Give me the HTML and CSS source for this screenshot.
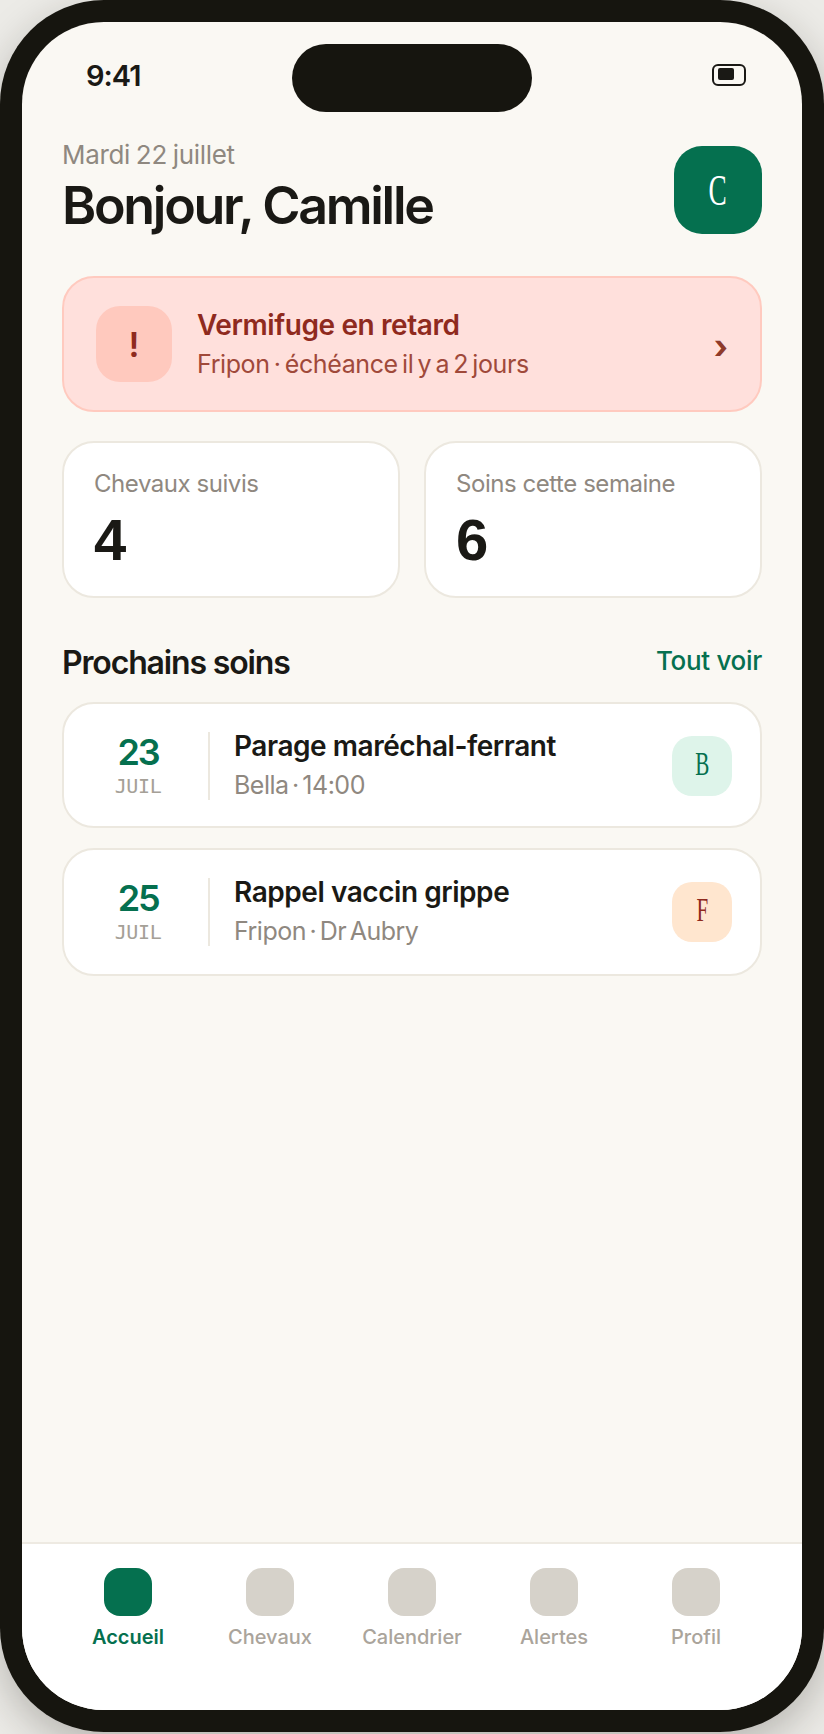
FILE: index.html
```html
<!DOCTYPE html>
<html lang="fr">
<head>
  <meta charset="UTF-8">
  <meta name="viewport" content="width=device-width, initial-scale=1.0">
  <title>Accueil</title>
  <link rel="stylesheet" href="styles.css">
</head>
<body>
  <div class="phone">
    <div class="screen">
      <div class="status">
        <span class="time">9:41</span>
        <div class="island"></div>
        <div class="battery"><span></span></div>
      </div>
      <main>
        <header class="top">
          <div>
            <p class="date">Mardi 22 juillet</p>
            <h1>Bonjour, Camille</h1>
          </div>
          <div class="avatar"><span class="serif">C</span></div>
        </header>

        <section class="alert">
          <div class="alert-icon">!</div>
          <div class="alert-text">
            <h2>Vermifuge en retard</h2>
            <p>Fripon · échéance il y a 2 jours</p>
          </div>
          <span class="chevron">›</span>
        </section>

        <section class="stats">
          <div class="stat">
            <p>Chevaux suivis</p>
            <strong>4</strong>
          </div>
          <div class="stat">
            <p>Soins cette semaine</p>
            <strong>6</strong>
          </div>
        </section>

        <div class="section-head">
          <h2>Prochains soins</h2>
          <a href="#">Tout voir</a>
        </div>

        <section class="list">
          <article class="card">
            <div class="day"><b>23</b><span>JUIL</span></div>
            <div class="info">
              <h3>Parage maréchal-ferrant</h3>
              <p>Bella · 14:00</p>
            </div>
            <div class="tag tag-green"><span class="serif">B</span></div>
          </article>
          <article class="card card-tall">
            <div class="day"><b>25</b><span>JUIL</span></div>
            <div class="info">
              <h3>Rappel vaccin grippe</h3>
              <p>Fripon · Dr Aubry</p>
            </div>
            <div class="tag tag-orange"><span class="serif">F</span></div>
          </article>
        </section>
      </main>

      <nav class="tabs">
        <a class="tab active" href="#"><i></i>Accueil</a>
        <a class="tab" href="#"><i></i>Chevaux</a>
        <a class="tab" href="#"><i></i>Calendrier</a>
        <a class="tab" href="#"><i></i>Alertes</a>
        <a class="tab" href="#"><i></i>Profil</a>
      </nav>
    </div>
  </div>
</body>
</html>
```

FILE: styles.css
```css
:root {
  --frame: #16150f;
  --paper: #faf8f3;
  --ink: #1a1915;
  --muted: #8f8880;
  --green: #05704f;
  --line: #ece8df;
  --red: #8f2a1e;
}
* {
  box-sizing: border-box;
  margin: 0;
  padding: 0;
}
html, body {
  height: 1734px;
  overflow: hidden;
}
body {
  background: #ecebe7;
  font-family: Inter, "Noto Sans", sans-serif;
  color: var(--ink);
}
a {
  text-decoration: none;
  color: inherit;
}
.phone {
  width: 824px;
  height: 1732px;
  padding: 22px;
  background: var(--frame);
  border-radius: 104px;
  box-shadow: 0 14px 40px rgba(30, 28, 20, 0.26);
}
.screen {
  height: 100%;
  background: var(--paper);
  border-radius: 82px;
  overflow: hidden;
  display: flex;
  flex-direction: column;
}
.serif {
  display: inline-block;
  font-family: "Liberation Serif", serif;
  transform: scaleX(0.62);
}

/* status bar */
.status {
  position: relative;
  height: 122px;
  flex-shrink: 0;
}
.time {
  position: absolute;
  left: 64px;
  top: 36px;
  font-size: 29px;
  font-weight: 600;
  letter-spacing: -1px;
}
.island {
  position: absolute;
  left: 270px;
  top: 22px;
  width: 240px;
  height: 68px;
  border-radius: 34px;
  background: var(--frame);
}
.battery {
  position: absolute;
  left: 690px;
  top: 42px;
  width: 34px;
  height: 22px;
  border: 2px solid var(--ink);
  border-radius: 6px;
  padding: 2px 4px;
}
.battery span {
  display: block;
  width: 16px;
  height: 12px;
  background: var(--ink);
  border-radius: 2px;
}

main {
  flex: 1;
  padding: 0 40px;
}
.top {
  display: flex;
  justify-content: space-between;
  align-items: center;
  height: 88px;
  margin-top: 2px;
  margin-bottom: 42px;
}
.date {
  font-size: 26px;
  color: var(--muted);
  letter-spacing: -0.35px;
  word-spacing: -1px;
  line-height: 32px;
  margin-top: -6px;
}
h1 {
  font-size: 52px;
  font-weight: 600;
  letter-spacing: -2.3px;
  line-height: 60px;
  margin-top: 5px;
}
.avatar {
  width: 88px;
  height: 88px;
  border-radius: 28px;
  background: var(--green);
  color: #fff;
  font-size: 44px;
  display: flex;
  align-items: center;
  justify-content: center;
}

/* alert */
.alert {
  height: 136px;
  display: flex;
  align-items: center;
  padding: 0 30px 0 32px;
  background: #ffe0dc;
  border: 2px solid #ffcabf;
  border-radius: 32px;
  margin-bottom: 29px;
}
.alert-icon {
  width: 76px;
  height: 76px;
  border-radius: 24px;
  background: #ffc9be;
  color: var(--red);
  font-size: 34px;
  font-weight: 600;
  display: flex;
  align-items: center;
  justify-content: center;
}
.alert-text {
  flex: 1;
  margin-left: 25px;
}
.alert-text h2 {
  font-size: 28px;
  font-weight: 600;
  letter-spacing: -0.4px;
  line-height: 38px;
  margin-top: 1px;
  color: var(--red);
}
.alert-text p {
  font-size: 25px;
  letter-spacing: -0.4px;
  word-spacing: -2.4px;
  line-height: 40px;
  color: #a0493a;
}
.chevron {
  font-size: 33px;
  font-weight: 700;
  line-height: 1;
  margin-right: 2px;
  padding-top: 4px;
  color: #8f3a2a;
}

/* stats */
.stats {
  display: grid;
  grid-template-columns: 1fr 1fr;
  gap: 24px;
  margin-bottom: 40px;
}
.stat {
  height: 157px;
  background: #fff;
  border: 2px solid var(--line);
  border-radius: 32px;
  padding: 26px 30px;
}
.stat p {
  font-size: 24px;
  letter-spacing: -0.45px;
  line-height: 30px;
  color: var(--muted);
}
.stat strong {
  display: block;
  font-family: "Liberation Sans", sans-serif;
  font-size: 58px;
  font-weight: 700;
  line-height: 62px;
  margin-top: 10px;
}

.section-head {
  display: flex;
  justify-content: space-between;
  align-items: center;
  height: 44px;
  margin-bottom: 20px;
}
.section-head h2 {
  font-size: 32px;
  font-weight: 600;
  letter-spacing: -1.15px;
  margin-top: 4px;
}
.section-head a {
  font-size: 26px;
  font-weight: 500;
  letter-spacing: -0.3px;
  color: var(--green);
}

/* upcoming */
.list {
  display: flex;
  flex-direction: column;
  gap: 20px;
}
.card {
  height: 126px;
  display: flex;
  align-items: center;
  background: #fff;
  border: 2px solid var(--line);
  border-radius: 32px;
  padding: 2px 28px 0 0;
}
.card-tall {
  height: 128px;
  padding-top: 0;
}
.day {
  width: 146px;
  height: 68px;
  border-right: 2px solid var(--line);
  display: flex;
  flex-direction: column;
  align-items: center;
  padding-left: 4px;
}
.day b {
  font-size: 36px;
  font-weight: 600;
  letter-spacing: -2.2px;
  line-height: 40px;
  color: var(--green);
}
.day span {
  font-family: "DejaVu Sans Mono", monospace;
  font-size: 20px;
  letter-spacing: -0.4px;
  line-height: 24px;
  margin-top: 2px;
  color: #a5a097;
}
.info {
  flex: 1;
  margin-left: 24px;
}
.info h3 {
  font-size: 28px;
  font-weight: 600;
  letter-spacing: -0.45px;
  line-height: 38px;
}
.info p {
  font-size: 25px;
  letter-spacing: -0.5px;
  word-spacing: -3px;
  line-height: 40px;
  color: var(--muted);
}
.tag {
  width: 60px;
  height: 60px;
  border-radius: 20px;
  font-size: 34px;
  padding-bottom: 4px;
  display: flex;
  align-items: center;
  justify-content: center;
}
.tag-green {
  background: #def4ea;
  color: var(--green);
}
.tag-orange {
  background: #ffe6cf;
  color: var(--red);
}

/* tab bar */
.tabs {
  height: 168px;
  flex-shrink: 0;
  display: grid;
  grid-template-columns: repeat(5, 142px);
  padding: 24px 35px 0;
  background: #fff;
  border-top: 2px solid #eeeae2;
}
.tab {
  display: flex;
  flex-direction: column;
  align-items: center;
  gap: 8px;
  font-size: 20px;
  font-weight: 500;
  line-height: 26px;
  color: #aaa49b;
}
.tab i {
  display: block;
  width: 48px;
  height: 48px;
  border-radius: 16px;
  background: #d6d2ca;
}
.tab.active {
  color: var(--green);
  font-weight: 600;
}
.tab.active i {
  background: var(--green);
}
```
